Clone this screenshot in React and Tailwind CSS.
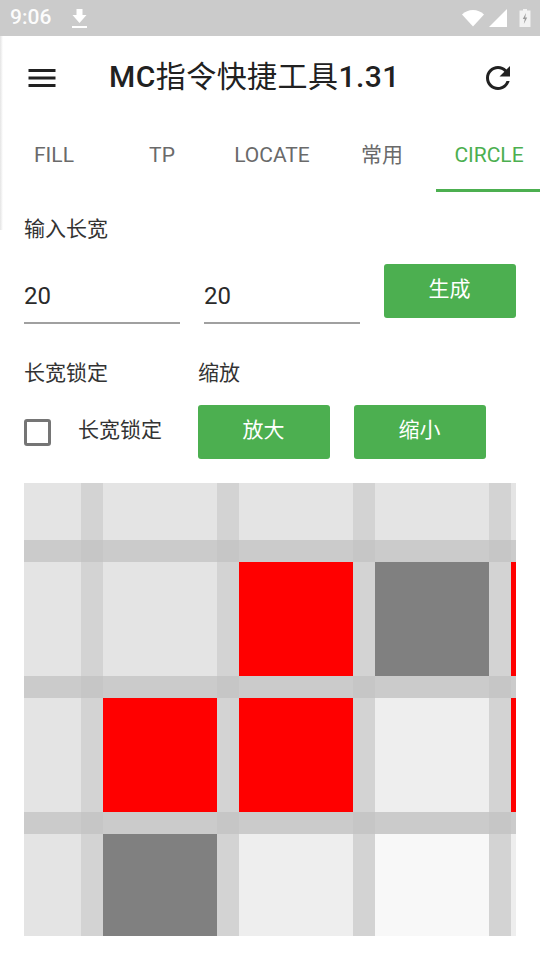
import React from 'react';

const COLS = ['w-[57px]', 'w-[22px]', 'w-[114px]', 'w-[22px]', 'w-[114px]', 'w-[22px]', 'w-[114px]', 'w-[22px]', 'w-[5px]'];
const ROW_HEIGHTS = ['h-[57px]', 'h-[22px]', 'h-[114px]', 'h-[22px]', 'h-[114px]', 'h-[22px]', 'h-[102px]'];

const CELLS = [
  ['bg-[#e4e4e4]', 'bg-[#e4e4e4]', 'bg-[#e4e4e4]', 'bg-[#e4e4e4]', 'bg-[#e4e4e4]'],
  ['bg-[#e4e4e4]', 'bg-[#e4e4e4]', 'bg-[#ff0000]', 'bg-[#808080]', 'bg-[#ff0000]'],
  ['bg-[#e4e4e4]', 'bg-[#ff0000]', 'bg-[#ff0000]', 'bg-[#eeeeee]', 'bg-[#ff0000]'],
  ['bg-[#e4e4e4]', 'bg-[#808080]', 'bg-[#eeeeee]', 'bg-[#f8f8f8]', 'bg-[#eeeeee]'],
];

const cellColor = (row, col) => {
  const rowLine = row % 2 === 1;
  const colLine = col % 2 === 1;
  if (rowLine && colLine) return 'bg-[#c6c6c6]';
  if (rowLine) return 'bg-[#cbcbcb]';
  if (colLine) return 'bg-[#d3d3d3]';
  return CELLS[row / 2][col / 2];
};

const PixelGrid = () => (
  <div className="mt-6 flex flex-col w-[492px]">
    {ROW_HEIGHTS.map((h, row) => (
      <div key={row} className={`flex ${h}`}>
        {COLS.map((w, col) => (
          <div key={col} className={`${w} ${cellColor(row, col)}`}></div>
        ))}
      </div>
    ))}
  </div>
);

const GreenButton = ({ label }) => (
  <button className="w-[132px] h-[54px] pb-[2px] pr-[1px] rounded-[3px] bg-[#4caf50] text-white text-[21px] flex items-center justify-center">
    {label}
  </button>
);

const NumberField = ({ value }) => (
  <div className="w-[156px] h-[54px] border-b-2 border-[#a0a0a0] text-[24px] text-[#2a2a2a] leading-[52px]">
    {value}
  </div>
);

const StatusBar = () => (
  <div className="h-9 bg-[#cbcbcb] flex items-center text-white">
    <span className="ml-[10px] text-[21px] font-medium opacity-95">9:06</span>
    <svg className="ml-[21px] w-[16px] h-[24px]" viewBox="0 0 16 24" fill="#fff">
      <path d="M4.500 3h6v6h4L7.500 17 .500 9h4V3zM0 20h15v2H0z" />
    </svg>
    <div className="ml-auto flex items-center">
      <svg className="w-[24px] h-[20px]" viewBox="0 0 24 20" fill="#fff">
        <path d="M12 18.500 1 6.500C4 3.500 7.800 2 12 2s8 1.500 11 4.500L12 18.500z" />
      </svg>
      <svg className="ml-[3px] w-[20px] h-[20px]" viewBox="0 0 20 20" fill="#fff">
        <path d="M19 1v18H1L19 1z" />
      </svg>
      <svg className="ml-[11px] mr-[9px] w-[12px] h-[20px]" viewBox="0 0 12 20">
        <path d="M4 1h4v1.500h3.500V19H.5V2.500H4z" fill="#fff" fillOpacity="0.75" />
        <path d="M7 5 3.800 11h2l-1 5 3.400-6.500h-2L7 5z" fill="#9a9a9a" />
      </svg>
    </div>
  </div>
);

const Toolbar = () => (
  <div className="h-[84px] flex items-center px-6">
    <svg className="w-9 h-9 text-[#212121]" viewBox="0 0 24 24" fill="currentColor">
      <path d="M3 18h18v-2H3v2zm0-5h18v-2H3v2zm0-7v2h18V6H3z" />
    </svg>
    <div className="ml-[49px] pb-[4px] text-[30px] tracking-[0.45px] text-[#212121] whitespace-nowrap">
      <span className="font-medium">MC</span>指令快捷工具<span className="font-medium">1.31</span>
    </div>
    <svg className="ml-auto w-9 h-9 text-[#212121]" viewBox="0 0 24 24" fill="currentColor">
      <path d="M17.650 6.350C16.200 4.900 14.210 4 12 4c-4.420 0-7.990 3.580-7.990 8s3.570 8 7.990 8c3.730 0 6.840-2.550 7.730-6h-2.080c-.82 2.330-3.040 4-5.650 4-3.310 0-6-2.690-6-6s2.690-6 6-6c1.660 0 3.140.69 4.220 1.780L13 11h7V4l-2.350 2.350z" />
    </svg>
  </div>
);

const Tabs = () => (
  <div className="h-[72px] flex overflow-hidden text-[21px] text-[#6a6a6a]">
    <div className="w-[108px] shrink-0 flex items-center justify-center">FILL</div>
    <div className="w-[108px] shrink-0 flex items-center justify-center">TP</div>
    <div className="w-[112px] shrink-0 flex items-center justify-center">LOCATE</div>
    <div className="w-[108px] shrink-0 flex items-center justify-center">常用</div>
    <div className="w-[108px] shrink-0 flex items-center justify-center pr-[2px] pt-[2px] text-[#4caf50] border-b-[3px] border-[#4caf50]">
      CIRCLE
    </div>
  </div>
);

const App = () => {
  return (
    <div
      className="relative w-[540px] h-[960px] overflow-hidden bg-white"
      style={{ fontFamily: 'Roboto, "Noto Sans CJK SC", sans-serif' }}
    >
      <StatusBar />
      <Toolbar />
      <Tabs />

      {/* drawer edge */}
      <div className="absolute left-0 top-9 w-[3px] h-[194px] bg-gradient-to-r from-[#e4e4e4] to-white"></div>

      <div className="px-6 text-[21px] text-[#333333]">
        <div className="mt-[23px] h-[28px] leading-[28px]">输入长宽</div>

        <div className="mt-[21px] flex gap-6">
          <div className="mt-[6px] flex gap-6">
            <NumberField value="20" />
            <NumberField value="20" />
          </div>
          <GreenButton label="生成" />
        </div>

        <div className="mt-[35px] flex h-[28px] leading-[28px]">
          <div className="w-[174px]">长宽锁定</div>
          <div>缩放</div>
        </div>

        <div className="mt-[18px] flex items-center">
          <div className="w-[27px] h-[27px] rounded-[3px] border-[3px] border-[#757575]"></div>
          <div className="ml-[27px] w-[120px] pb-[2px]">长宽锁定</div>
          <div className="flex gap-6">
            <GreenButton label="放大" />
            <GreenButton label="缩小" />
          </div>
        </div>

        <PixelGrid />
      </div>
    </div>
  );
};

export default App;
